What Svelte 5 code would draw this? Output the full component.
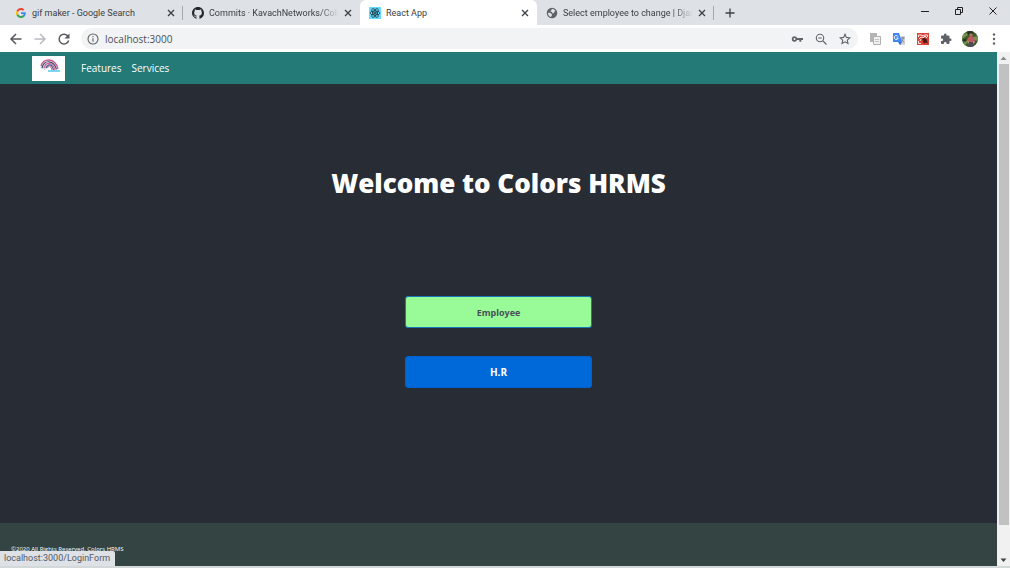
<script>
  const tabs = [
    { icon: 'google', title: 'gif maker - Google Search' },
    { icon: 'github', title: 'Commits · KavachNetworks/Colo', long: true },
    { icon: 'react', title: 'React App', active: true },
    { icon: 'globe', title: 'Select employee to change | Djan', long: true }
  ];
  let address = $state('localhost:3000');
</script>

<div class="browser">
  <header class="tabstrip">
    <div class="tabs">
      {#each tabs as tab}
        <div class="tab" class:active={tab.active}>
          {#if tab.icon === 'google'}
            <svg class="fav google" viewBox="0 0 48 48" aria-hidden="true">
              <path fill="#ea4335" d="M24 10c3.500 0 6.600 1.200 9.100 3.600l6.800-6.800C35.900 2.700 30.500 0 24 0 14.600 0 6.500 5.400 2.600 13.200l7.900 6.200C12.400 13.700 17.700 10 24 10z" />
              <path fill="#4285f4" d="M47 24.500c0-1.600-.2-3.100-.4-4.500H24v9h13c-.6 3-2.300 5.500-4.800 7.200l7.700 6C44.400 38 47 31.800 47 24.500z" />
              <path fill="#fbbc05" d="M10.500 28.600a14.500 14.500 0 0 1 0-9.200l-7.900-6.200a24 24 0 0 0 0 21.600z" />
              <path fill="#34a853" d="M24 48c6.500 0 11.900-2.100 15.900-5.800l-7.700-6c-2.200 1.500-4.900 2.300-8.200 2.300-6.300 0-11.600-4.200-13.500-9.900l-7.900 6.200C6.500 42.600 14.600 48 24 48z" />
            </svg>
          {:else if tab.icon === 'github'}
            <svg class="fav" viewBox="0 0 16 16" aria-hidden="true">
              <path fill="#24292e" d="M8 0C3.580 0 0 3.580 0 8c0 3.540 2.290 6.530 5.470 7.590.4.070.55-.17.55-.38 0-.19-.01-.82-.01-1.490-2.010.37-2.530-.49-2.690-.94-.09-.23-.48-.94-.82-1.130-.28-.15-.68-.52-.01-.53.63-.01 1.080.58 1.230.82.72 1.210 1.870.87 2.330.66.070-.52.28-.87.51-1.070-1.780-.2-3.640-.89-3.640-3.950 0-.87.31-1.590.82-2.150-.08-.2-.36-1.020.08-2.120 0 0 .67-.21 2.200.82A7.600 7.600 0 0 1 8 3.860c.68 0 1.360.09 2 .27 1.530-1.040 2.200-.82 2.200-.82.44 1.100.16 1.920.08 2.120.51.56.82 1.270.82 2.150 0 3.070-1.870 3.750-3.650 3.950.29.25.54.73.54 1.480 0 1.070-.01 1.930-.01 2.200 0 .21.15.46.55.38A8 8 0 0 0 16 8c0-4.420-3.580-8-8-8z" />
            </svg>
          {:else if tab.icon === 'react'}
            <svg class="fav" viewBox="0 0 24 24" aria-hidden="true">
              <rect width="24" height="24" rx="1" fill="#61dafb" />
              <g fill="none" stroke="#20333e" stroke-width="1.500">
                <ellipse cx="12" cy="12" rx="10" ry="4" />
                <ellipse cx="12" cy="12" rx="10" ry="4" transform="rotate(60 12 12)" />
                <ellipse cx="12" cy="12" rx="10" ry="4" transform="rotate(120 12 12)" />
              </g>
              <circle cx="12" cy="12" r="2" fill="#20333e" />
            </svg>
          {:else}
            <svg class="fav" viewBox="0 0 24 24" aria-hidden="true">
              <circle cx="12" cy="12" r="10.500" fill="#5f6368" />
              <path fill="#dee1e6" d="M4 12c3-1 6 0 7 2 2 1 1 3 0 4l-1 2c-4-1-6-4-6-8zM12 4c3 0 5 1 7 4l-2 1-1 3-3 1-1-3-3-1 1-2z" />
            </svg>
          {/if}
          <span class="title" class:long={tab.long}>{tab.title}</span>
          <button class="close" aria-label="Close tab">
            <svg viewBox="0 0 8 8"><path d="M1 1l6 6M7 1L1 7" /></svg>
          </button>
        </div>
      {/each}
      <button class="plus" aria-label="New tab">
        <svg viewBox="0 0 10 10"><path d="M5 .5v9M.5 5h9" /></svg>
      </button>
    </div>
    <div class="window">
      <button aria-label="Minimize"><svg viewBox="0 0 10 10"><path d="M1 5.500h8" /></svg></button>
      <button aria-label="Restore"><svg viewBox="0 0 10 10"><path d="M1.500 3.500h5v5h-5zM3.500 3.500v-2h5v5h-2" /></svg></button>
      <button aria-label="Close"><svg viewBox="0 0 10 10"><path d="M1.500 1.500l7 7M8.500 1.500l-7 7" /></svg></button>
    </div>
  </header>

  <div class="toolbar">
    <div class="navigate">
      <button aria-label="Back"><svg viewBox="0 0 14 14"><path d="M12.500 7H2.500M7 2L2 7l5 5" /></svg></button>
      <button class="off" aria-label="Forward" disabled><svg viewBox="0 0 14 14"><path d="M1.500 7h10M7 2l5 5-5 5" /></svg></button>
      <button aria-label="Reload">
        <svg viewBox="0 0 14 14"><path d="M11 4.200A4.900 4.900 0 1 0 11.700 8.500" /><path class="solid" d="M12.500 1.500v5h-5z" /></svg>
      </button>
    </div>
    <div class="omnibox">
      <svg class="info" viewBox="0 0 12 12" aria-hidden="true"><circle cx="6" cy="6" r="5" /><path d="M6 5.300v3.400M6 3v1.300" /></svg>
      <input aria-label="Address" bind:value={address} />
      <button aria-label="Passwords">
        <svg viewBox="0 0 12 12"><path class="solid" d="M3.500 3.200a2.800 2.800 0 1 0 2.600 3.900h2.200v1.700h2V7.100H12V5H6.100a2.800 2.800 0 0 0-2.600-1.800zm0 1.800a1 1 0 1 1 0 2 1 1 0 0 1 0-2z" fill-rule="evenodd" /></svg>
      </button>
      <button aria-label="Zoom">
        <svg viewBox="0 0 12 12"><circle cx="5" cy="5" r="3.700" /><path d="M8 8l3.500 3.500M3.200 5h3.600" /></svg>
      </button>
      <button aria-label="Bookmark">
        <svg viewBox="0 0 12 12"><path d="M6 1.300l1.400 3.100 3.400.4-2.500 2.300.7 3.400-3-1.700-3 1.700.7-3.400L1.200 4.800l3.400-.4z" /></svg>
      </button>
    </div>
    <div class="extensions">
      <button aria-label="Copy pages">
        <svg viewBox="0 0 14 14"><path fill="#b4b4b4" d="M2 1h7v9H2z" /><path fill="#f0f0f0" stroke="#b0b0b0" stroke-width="1" d="M5.500 4.500h7v8h-7z" /><path stroke="#c4c4c4" fill="none" d="M7 7.500h4M7 9.500h4" /></svg>
      </button>
      <button aria-label="Translate">
        <svg viewBox="0 0 14 14"><path fill="#d2d4d7" d="M6 4h7v9H8z" /><path fill="#4285f4" d="M1 1h6l3 9H1z" /><path fill="#3367d6" d="M6 10h4l-2 3z" /><path fill="none" stroke="#fff" d="M6 4.500a2 2 0 1 0 .2 1.500H4.500" /><path fill="none" stroke="#7b8289" d="M9 6h3.500M11 5v1c0 2-1 3-2 4M9.500 7.500l2.500 3" /></svg>
      </button>
      <button aria-label="Screen capture">
        <svg viewBox="0 0 14 14"><path fill="#dc4238" d="M1 1h12v12H1z" /><path fill="none" stroke="#fff" stroke-width=".9" d="M2.500 5V3H5l2 1 2-1h2.500v2M2.500 9v2.500H5M3 7l2-2 2 1 2-2 2 2M4 9l1-2" /><path fill="#4a1815" d="M6 6.500l2-.5 3 1.500v1.500l1 2.500-2-1-2 1-1-2z" /></svg>
      </button>
      <button aria-label="Extensions">
        <svg viewBox="0 0 24 24"><path fill="#5f6368" d="M20.500 11H19V7a2 2 0 0 0-2-2h-4V3.500a2.500 2.500 0 0 0-5 0V5H4a2 2 0 0 0-2 2v3.800h1.500a2.700 2.700 0 0 1 0 5.400H2V20c0 1.100.9 2 2 2h3.800v-1.500a2.700 2.700 0 0 1 5.400 0V22H17a2 2 0 0 0 2-2v-4h1.500a2.500 2.500 0 0 0 0-5z" /></svg>
      </button>
      <button class="avatar" aria-label="Profile">
        <svg viewBox="0 0 16 16">
          <defs><clipPath id="face"><circle cx="8" cy="8" r="8" /></clipPath></defs>
          <g clip-path="url(#face)">
            <path fill="#3f5a2c" d="M0 0h16v16H0z" /><path fill="#77954b" d="M0 4l5-2 1 2-6 4zM11 6l5-1v5l-4-1zM1 12l4-2v2l-3 3z" /><path fill="#25301f" d="M5 0h6v3l-5 1zM0 9l4-1v2H1z" />
            <circle cx="9" cy="4" r="1.800" fill="#ac765a" /><path fill="#bd5960" d="M6 7l2-2 4 1 1 5-3 1H7L5 10z" /><path fill="#4e4b59" d="M7 11h4l1 5H6z" /><path fill="#c59b78" d="M5 9l2 2-1 2zM11 10l2 1-2 2z" />
          </g>
        </svg>
      </button>
      <button class="menu" aria-label="Menu">
        <svg viewBox="0 0 14 14"><g fill="#5f6368"><circle cx="7" cy="2.500" r="1.200" /><circle cx="7" cy="7" r="1.200" /><circle cx="7" cy="11.500" r="1.200" /></g></svg>
      </button>
    </div>
  </div>

  <div class="viewport">
    <div class="page">
      <nav>
        <a class="brand" href="#home" aria-label="Home">
          <svg viewBox="0 0 33 25" aria-hidden="true">
            <path fill="#d9dbe6" d="M8 12l4-6 6 4-5 4z" />
            <g fill="none">
              <path stroke="#c4598c" stroke-width="1.400" d="M9 10c2-8 14-9 17 3" />
              <path stroke="#44497c" stroke-width="1.200" d="M10 12c2-9 12-8 14.500 1.500" />
              <path stroke="#d0688f" stroke-width="1.300" d="M12 12c2-7 9-6 11 2" />
              <path stroke="#4b5c90" stroke-width="1.200" d="M14 12c2-5 6-4 7.500 2" />
              <path stroke="#c4598c" stroke-width="1" d="M15.500 12c1-3 3-3 4.500 2" />
              <path stroke="#7fd6ec" stroke-width="2" d="M16 15h12" />
            </g>
          </svg>
        </a>
        <a href="#features">Features</a>
        <a href="#services">Services</a>
      </nav>
      <main>
        <h1>Welcome to Colors HRMS</h1>
        <div class="choices">
          <button class="employee">Employee</button>
          <button>H.R</button>
        </div>
      </main>
      <footer>©2020 All Rights Reserved. Colors HRMS</footer>
    </div>
    <div class="scrollbar" aria-hidden="true">
      <svg viewBox="0 0 13 12"><path fill="#8b8b8b" d="M3.500 8l3-3.500 3 3.500z" /></svg>
      <div class="track"><div class="thumb"></div></div>
      <svg viewBox="0 0 13 12"><path fill="#444" d="M3.500 4.500l3 3.500 3-3.500z" /></svg>
    </div>
    <div class="status">localhost:3000/LoginForm</div>
  </div>
</div>

<style>
  :global(body) { margin: 0; }
  .browser, .browser * { box-sizing: border-box; }
  .browser {
    display: flex;
    flex-direction: column;
    min-height: 100vh;
    padding-bottom: 2px;
    background: #d3d9d8;
    font-family: "Open Sans", "Noto Sans", sans-serif;
    font-size: 10px;
    color: #3c4043;
  }
  button { padding: 0; border: 0; background: none; font: inherit; color: inherit; }
  svg { display: block; flex: none; }
  a { color: inherit; text-decoration: none; }

  .tabstrip { display: flex; justify-content: space-between; height: 25px; background: #dee1e6; }
  .tabs { display: flex; flex: 1; min-width: 0; padding-left: 6px; }
  .tab {
    display: flex;
    align-items: center;
    gap: 5px;
    flex: 0 1 177px;
    min-width: 0;
    padding: 0 8px 0 9px;
    font-family: Roboto, "Open Sans", sans-serif;
    font-size: 9px;
    background: linear-gradient(#a5a8ad, #a5a8ad) right center / 1px 14px no-repeat;
  }
  .tab.active { background: #fff; border-radius: 6px 6px 0 0; }
  .tab:has(+ .active) { background: none; }
  .fav { width: 12px; height: 12px; }
  .google { padding: 1px; }
  .title { flex: 1; min-width: 0; overflow: hidden; white-space: nowrap; }
  .title.long { mask-image: linear-gradient(to right, #000 calc(100% - 20px), transparent); }
  .close svg { width: 8px; height: 8px; }
  .close svg, .plus svg { fill: none; stroke: #3c4043; stroke-width: 1.3; }
  .plus { margin-left: 11px; }
  .plus svg { width: 10px; height: 10px; }
  .window { display: flex; align-items: center; gap: 24px; height: 21px; padding-right: 12px; }
  .window svg { width: 10px; height: 10px; fill: none; stroke: #222; stroke-width: 1; }

  .toolbar { display: flex; align-items: center; gap: 10px; height: 27px; padding: 0 10px 0 9px; background: #fff; }
  .navigate { display: flex; gap: 10px; }
  .navigate svg { width: 14px; height: 14px; fill: none; stroke: #55595e; stroke-width: 1.5; }
  .navigate .off svg { stroke: #b9bbbe; }
  .navigate .solid { fill: #55595e; stroke: none; }
  .omnibox {
    display: flex;
    align-items: center;
    gap: 12px;
    flex: 1;
    min-width: 0;
    height: 21px;
    padding: 0 7px 0 6px;
    border-radius: 11px;
    background: #f1f3f4;
  }
  .omnibox svg { width: 12px; height: 12px; fill: none; stroke: #5f6368; stroke-width: 1.1; }
  .omnibox .solid { fill: #5f6368; stroke: none; }
  .omnibox .info { margin-right: -6px; }
  .omnibox input { flex: 1; min-width: 0; padding: 0; border: 0; outline: 0; background: none; font: inherit; color: #4c5054; }
  .extensions { display: flex; align-items: center; gap: 10px; }
  .extensions svg { width: 14px; height: 14px; }
  .extensions button:nth-child(4) svg { width: 12px; height: 12px; }
  .extensions .avatar svg { width: 16px; height: 16px; }
  .menu { margin: 0 -1px; }

  .viewport { position: relative; display: flex; flex: 1; }
  .page { display: flex; flex-direction: column; flex: 1; min-width: 0; background: #282c34; color: #fff; }
  nav { display: flex; align-items: center; gap: 10px; height: 32px; padding-left: 32px; background: #237a77; }
  .brand { width: 33px; height: 25px; margin-right: 6px; background: #fff; }
  main { display: flex; flex-direction: column; align-items: center; flex: 1; padding: 81px 20px 40px; }
  h1 { margin: 0; font-size: 26px; line-height: 36px; font-weight: 800; text-align: center; }
  .choices { display: flex; flex-direction: column; gap: 28px; width: 100%; max-width: 187px; margin-top: 95px; }
  .choices button { height: 32px; border: 1px solid #0062cc; border-radius: 3px; background: #0069d9; color: #fff; font-weight: 700; }
  .choices .employee { border-color: #1479b8; background: #98fb98; color: #495057; font-size: 9px; }
  footer { height: 43px; padding: 20px 11px 0; background: #334443; font-size: 6px; line-height: 12px; }
  .scrollbar { display: flex; flex-direction: column; width: 13px; background: #f1f1f1; }
  .scrollbar svg { width: 13px; height: 12px; }
  .track { flex: 1; padding: 0 1px 0 2px; }
  .thumb { height: 94%; min-height: 20px; background: #c1c1c1; }
  .status {
    position: absolute;
    left: 0;
    bottom: 0;
    height: 15px;
    padding: 0 5px 0 4px;
    border-radius: 0 2px 0 0;
    background: #dee1e6;
    color: #55595e;
    font-family: Roboto, "Open Sans", sans-serif;
    font-size: 9px;
    line-height: 15px;
  }
</style>
